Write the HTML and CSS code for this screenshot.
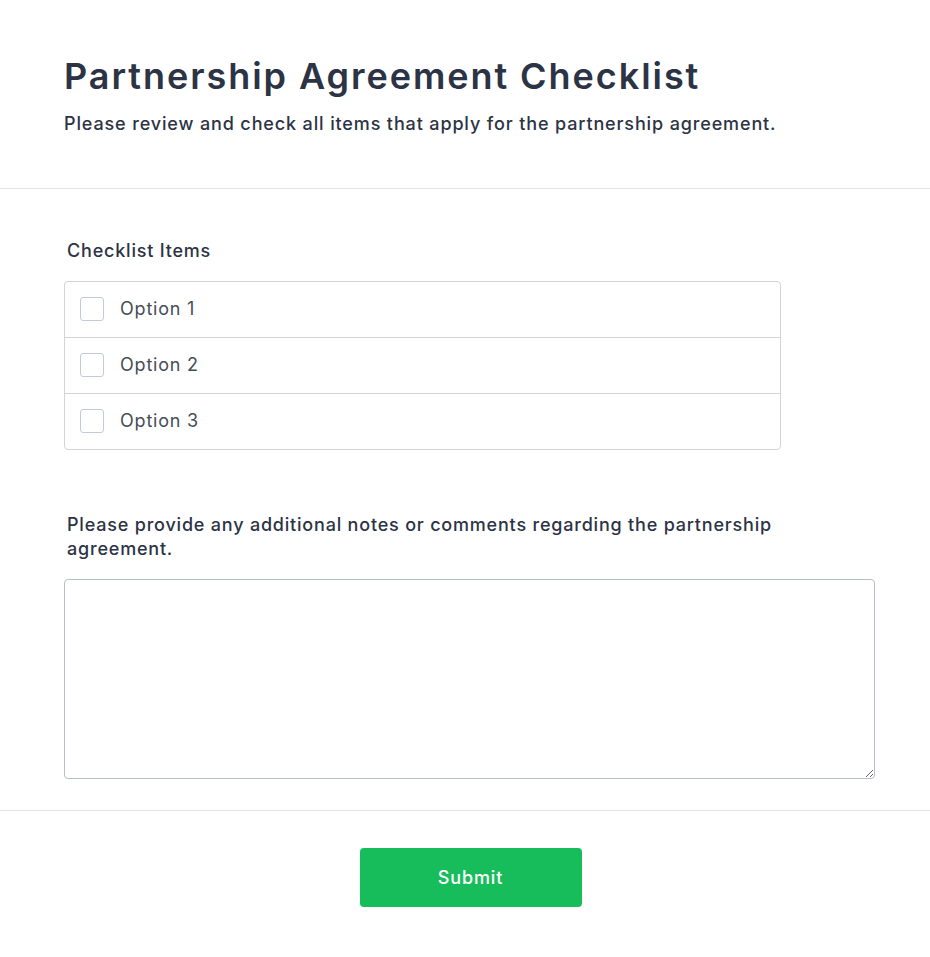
FILE: index.html
```html
<!DOCTYPE html>
<html lang="en">
<head>
<meta charset="utf-8">
<title>Partnership Agreement Checklist</title>
<link rel="stylesheet" href="styles.css">
</head>
<body>
<header class="header">
  <h1 class="title">Partnership Agreement Checklist</h1>
  <p class="subtitle">Please review and check all items that apply for the partnership agreement.</p>
</header>
<main class="form">
  <section class="field checklist-field">
    <div class="label">Checklist Items</div>
    <div class="checklist">
      <label class="option"><input type="checkbox" class="box"><span>Option 1</span></label>
      <label class="option"><input type="checkbox" class="box"><span>Option 2</span></label>
      <label class="option"><input type="checkbox" class="box"><span>Option 3</span></label>
    </div>
  </section>
  <section class="field notes-field">
    <div class="label">Please provide any additional notes or comments regarding the partnership agreement.</div>
    <textarea class="notes"></textarea>
  </section>
</main>
<footer class="footer">
  <div class="footer-inner">
    <button type="button" class="submit">Submit</button>
  </div>
</footer>
</body>
</html>
```
FILE: styles.css
```css
* { box-sizing: border-box; }
html, body { background: #ffffff; }
body {
  margin: 0;
  font-family: Inter, "Noto Sans", sans-serif;
  color: #2c3345;
  letter-spacing: 0.05em;
}
.header {
  padding: 55px 64px 51px;
  border-bottom: 1px solid #e3e3ee;
}
.title {
  margin: 0 0 12px;
  font-size: 36px;
  line-height: 1.2;
  font-weight: 600;
  letter-spacing: 0.054em;
  color: #2c3345;
}
.subtitle {
  margin: 0;
  font-size: 18px;
  line-height: 27px;
  font-weight: 500;
  letter-spacing: 0.048em;
  color: #2c3345;
}
.form {
  width: 813px;
  margin-left: 64px;
  padding: 50px 0 31px;
}
.field { display: flex; flex-direction: column; }
.label {
  max-width: 730px;
  padding-left: 3px;
  font-size: 18px;
  line-height: 24.5px;
  font-weight: 500;
  color: #2c3345;
  margin-bottom: 17px;
}
.checklist {
  width: 717px;
  border: 1px solid #d3d3d8;
  border-radius: 4px;
}
.option {
  display: flex;
  align-items: center;
  gap: 16px;
  padding: 15.5px 15px;
  border-bottom: 1px solid #d3d3d8;
  font-size: 18px;
  line-height: 24px;
  color: #474d57;
}
.option:last-child { border-bottom: none; }
.box {
  appearance: none;
  -webkit-appearance: none;
  margin: 0;
  width: 24px;
  height: 24px;
  border: 1px solid #c3cad8;
  border-radius: 3px;
  background: #fff;
  flex: none;
}
.notes-field { margin-top: 63px; }
.notes {
  width: 811px;
  height: 200px;
  border: 1px solid #b8bdc9;
  border-radius: 4px;
  background: #fff;
  margin: 0;
  font-family: inherit;
}
.footer {
  border-top: 1px solid #e3e3ee;
  padding: 37px 0 48px;
}
.footer-inner {
  width: 813px;
  margin-left: 64px;
  display: flex;
  justify-content: center;
}
.submit {
  width: 222px;
  height: 59px;
  border: none;
  border-radius: 4px;
  background: #18bd5b;
  color: #ffffff;
  font-family: Inter, "Noto Sans", sans-serif;
  font-size: 18px;
  font-weight: 500;
  letter-spacing: 0.05em;
}
```
